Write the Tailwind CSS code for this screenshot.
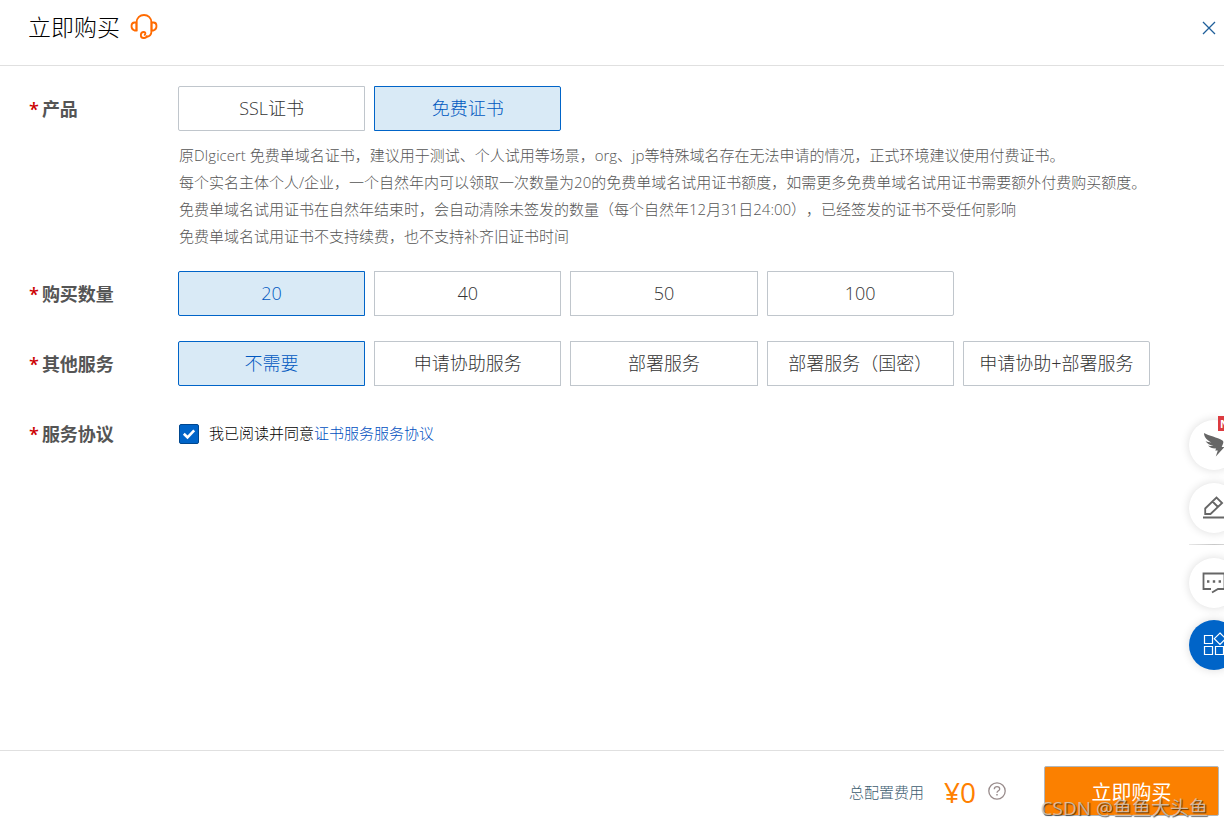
<!DOCTYPE html>
<html lang="zh-CN">
<head>
<meta charset="utf-8">
<meta name="viewport" content="width=device-width, initial-scale=1">
<title>立即购买</title>
<script src="https://cdn.jsdelivr.net/npm/@tailwindcss/browser@4"></script>
</head>
<body class="bg-white text-[#333] font-['Open_Sans','Noto_Sans_CJK_SC',sans-serif] font-light overflow-x-hidden">
<div class="relative min-h-screen flex flex-col overflow-hidden">
  <header class="h-[66px] shrink-0 border-b border-[#e0e0e0] flex items-start justify-between pl-[28px] pr-2 pt-[11px]">
    <div class="flex items-center gap-[10px]">
      <h1 class="text-[23px] leading-8 text-black">立即购买</h1>
      <svg class="w-[28px] h-[28px]" viewBox="0 0 28 28" fill="none" stroke="#ff6a00" stroke-width="1.800" aria-hidden="true">
        <path d="M6.500 18V9.500C6.800 4.800 10 2 14 2s7.200 2.800 7.500 7.500V18c0 3-1.800 5.400-5 6"/>
        <path d="M6.500 9.500H4.500Q1.500 9.500 1.500 13t3 4.500h2zM21.500 9.500h2q3 0 3 3.500t-3 4.500h-2z"/>
        <path d="M16.800 22.300a3 3 0 1 1-3-3.300c1.200 0 1.600.8 1.600 1.600s-.6 1.400-1.500 1.400"/>
      </svg>
    </div>
    <button type="button" aria-label="关闭" class="mt-[10px] w-[14px] h-[14px] text-[#1f5f9a]">
      <svg class="w-full h-full" viewBox="0 0 14 14" fill="none" stroke="currentColor" stroke-width="1.300"><path d="M1 1l12 12M13 1L1 13"/></svg>
    </button>
  </header>

  <main class="flex-1 flex flex-col gap-[25px] pt-5 pl-[29px] pr-16">
    <fieldset class="flex items-start" aria-labelledby="l1">
      <div id="l1" class="w-[149px] shrink-0 flex gap-[3px] pt-[2px] text-[18px] leading-[43px] font-bold text-[#555]"><span class="text-[#c00] font-semibold">*</span>产品</div>
      <div class="flex-1">
        <div class="grid grid-cols-5 gap-[9px] max-w-[972px]">
          <label class="relative h-[45px] flex items-center justify-center border border-[#c0c6cc] text-[18px] whitespace-nowrap cursor-pointer first:rounded-l-xs last:rounded-r-xs has-checked:border-[#0064c8] has-checked:bg-[#d9eaf6] has-checked:text-[#0058c0]"><input class="sr-only" type="radio" name="product">SSL证书</label>
          <label class="relative h-[45px] flex items-center justify-center border border-[#c0c6cc] text-[18px] whitespace-nowrap cursor-pointer first:rounded-l-xs last:rounded-r-xs has-checked:border-[#0064c8] has-checked:bg-[#d9eaf6] has-checked:text-[#0058c0]"><input class="sr-only" type="radio" name="product" checked>免费证书</label>
        </div>
        <div class="pt-[11px] -mb-1 pl-px text-[15px] leading-[27px] text-[#555] [text-spacing-trim:space-all]">
          <p>原DIgicert 免费单域名证书，建议用于测试、个人试用等场景，org、jp等特殊域名存在无法申请的情况，正式环境建议使用付费证书。</p>
          <p>每个实名主体个人/企业，一个自然年内可以领取一次数量为20的免费单域名试用证书额度，如需更多免费单域名试用证书需要额外付费购买额度。</p>
          <p>免费单域名试用证书在自然年结束时，会自动清除未签发的数量（每个自然年12月31日24:00），已经签发的证书不受任何影响</p>
          <p>免费单域名试用证书不支持续费，也不支持补齐旧证书时间</p>
        </div>
      </div>
    </fieldset>

    <fieldset class="flex items-start" aria-labelledby="l2">
      <div id="l2" class="w-[149px] shrink-0 flex gap-[3px] pt-[2px] text-[18px] leading-[43px] font-bold text-[#555]"><span class="text-[#c00] font-semibold">*</span>购买数量</div>
      <div class="flex-1 grid grid-cols-5 gap-[9px] max-w-[972px]">
        <label class="relative h-[45px] flex items-center justify-center border border-[#c0c6cc] text-[18px] whitespace-nowrap cursor-pointer first:rounded-l-xs last:rounded-r-xs has-checked:border-[#0064c8] has-checked:bg-[#d9eaf6] has-checked:text-[#0058c0]"><input class="sr-only" type="radio" name="count" checked>20</label>
        <label class="relative h-[45px] flex items-center justify-center border border-[#c0c6cc] text-[18px] whitespace-nowrap cursor-pointer first:rounded-l-xs last:rounded-r-xs has-checked:border-[#0064c8] has-checked:bg-[#d9eaf6] has-checked:text-[#0058c0]"><input class="sr-only" type="radio" name="count">40</label>
        <label class="relative h-[45px] flex items-center justify-center border border-[#c0c6cc] text-[18px] whitespace-nowrap cursor-pointer first:rounded-l-xs last:rounded-r-xs has-checked:border-[#0064c8] has-checked:bg-[#d9eaf6] has-checked:text-[#0058c0]"><input class="sr-only" type="radio" name="count">50</label>
        <label class="relative h-[45px] flex items-center justify-center border border-[#c0c6cc] text-[18px] whitespace-nowrap cursor-pointer first:rounded-l-xs last:rounded-r-xs has-checked:border-[#0064c8] has-checked:bg-[#d9eaf6] has-checked:text-[#0058c0]"><input class="sr-only" type="radio" name="count">100</label>
      </div>
    </fieldset>

    <fieldset class="flex items-start" aria-labelledby="l3">
      <div id="l3" class="w-[149px] shrink-0 flex gap-[3px] pt-[2px] text-[18px] leading-[43px] font-bold text-[#555]"><span class="text-[#c00] font-semibold">*</span>其他服务</div>
      <div class="flex-1 grid grid-cols-5 gap-[9px] max-w-[972px]">
        <label class="relative h-[45px] flex items-center justify-center border border-[#c0c6cc] text-[18px] whitespace-nowrap cursor-pointer first:rounded-l-xs last:rounded-r-xs has-checked:border-[#0064c8] has-checked:bg-[#d9eaf6] has-checked:text-[#0058c0]"><input class="sr-only" type="radio" name="service" checked>不需要</label>
        <label class="relative h-[45px] flex items-center justify-center border border-[#c0c6cc] text-[18px] whitespace-nowrap cursor-pointer first:rounded-l-xs last:rounded-r-xs has-checked:border-[#0064c8] has-checked:bg-[#d9eaf6] has-checked:text-[#0058c0]"><input class="sr-only" type="radio" name="service">申请协助服务</label>
        <label class="relative h-[45px] flex items-center justify-center border border-[#c0c6cc] text-[18px] whitespace-nowrap cursor-pointer first:rounded-l-xs last:rounded-r-xs has-checked:border-[#0064c8] has-checked:bg-[#d9eaf6] has-checked:text-[#0058c0]"><input class="sr-only" type="radio" name="service">部署服务</label>
        <label class="relative h-[45px] flex items-center justify-center border border-[#c0c6cc] text-[18px] whitespace-nowrap cursor-pointer first:rounded-l-xs last:rounded-r-xs has-checked:border-[#0064c8] has-checked:bg-[#d9eaf6] has-checked:text-[#0058c0]"><input class="sr-only" type="radio" name="service">部署服务（国密）</label>
        <label class="relative h-[45px] flex items-center justify-center border border-[#c0c6cc] text-[18px] whitespace-nowrap cursor-pointer first:rounded-l-xs last:rounded-r-xs has-checked:border-[#0064c8] has-checked:bg-[#d9eaf6] has-checked:text-[#0058c0]"><input class="sr-only" type="radio" name="service">申请协助+部署服务</label>
      </div>
    </fieldset>

    <div class="flex items-center">
      <div class="w-[150px] shrink-0 flex gap-[3px] pt-[2px] text-[18px] leading-[43px] font-bold text-[#555]"><span class="text-[#c00] font-semibold">*</span>服务协议</div>
      <div class="flex items-center text-[15px] text-black">
        <span class="grid w-5 h-5 mr-[10px]">
          <input id="agree" type="checkbox" checked class="peer col-start-1 row-start-1 appearance-none w-5 h-5 rounded-xs border border-[#00478f] checked:bg-[#0064c8]">
          <svg class="col-start-1 row-start-1 w-5 h-5 pointer-events-none" viewBox="0 0 20 20" fill="none" stroke="#fff" stroke-width="2.600" aria-hidden="true"><path d="M4.800 9.800l3.700 3.500 6.700-7"/></svg>
        </span>
        <label for="agree">我已阅读并同意</label><a href="#" class="text-[#0050c0]">证书服务服务协议</a>
      </div>
    </div>
  </main>

  <footer class="h-[78px] shrink-0 border-t border-[#e0e0e0] flex items-center justify-end pr-[5px] pt-[6px]">
    <span class="text-[15px] text-[#3c5c70] mr-5">总配置费用</span>
    <span class="text-[28px] leading-8 font-normal text-[#ff8000] mr-3 mb-[2px]">¥0</span>
    <button type="button" aria-label="费用说明" class="w-[18px] h-[18px] mr-[38px] mb-1 text-[#998c8c]">
      <svg class="w-full h-full" viewBox="0 0 18 18" fill="none" stroke="currentColor" stroke-width="1.300"><circle cx="9" cy="9" r="8.200"/><path d="M6.300 7.200C6.300 5.500 7.400 4.600 9 4.600s2.700.9 2.700 2.300c0 1.900-2.700 1.900-2.700 3.900"/><path d="M9 12v1.600" stroke-width="1.500"/></svg>
    </button>
    <button type="button" class="w-[175px] h-[50px] pt-[3px] rounded-xs border border-[#b0b8be] bg-[#fb8000] text-white text-[20px] font-normal mb-[3px]">立即购买</button>
  </footer>

  <!-- Floating toolbar, partly beyond the right edge -->
  <aside class="absolute -right-[15px] top-[420px] w-[50px] flex flex-col" aria-label="工具栏">
    <button type="button" aria-label="消息" class="relative w-[50px] h-[50px] rounded-full bg-white shadow-[0_0_10px_rgba(0,0,0,0.14)]">
      <svg class="w-full h-full" viewBox="0 0 50 50" fill="#666"><path d="M15 13c5 3 13 4 18.500 7.500 2 1.400 0 4-.8 6.500h2.800l-8.700 9.500 2-6h-2.600l1-2c-4 .2-6.200-1-8.200-3 2 .6 4 .6 5.500.4-3.500-.7-6.500-2.400-8-5 2 1 4 1.400 6 1.500-4-1.900-7.400-4.700-7.500-9.400z"/></svg>
      <span class="absolute left-[29px] -top-[4px] h-[15px] px-[2px] bg-[#dc3b40] text-white text-[11px] leading-[15px] font-bold">NEW</span>
    </button>
    <button type="button" aria-label="编辑" class="mt-[13px] w-[50px] h-[50px] rounded-full bg-white shadow-[0_0_10px_rgba(0,0,0,0.14)]">
      <svg class="w-full h-full" viewBox="0 0 50 50" fill="none" stroke="#666" stroke-width="1.800"><path d="M16.200 31v-5.500L27.500 14.600l5.600 5.400L21.500 31zM23.500 18.500l5.500 5.500M14 34.500h22"/></svg>
    </button>
    <div role="separator" class="mt-[11px] mb-[13px] h-px bg-linear-to-r from-[#e8e8e8] via-[#c8c8c8] to-[#e8e8e8]"></div>
    <button type="button" aria-label="客服" class="w-[50px] h-[50px] rounded-full bg-white shadow-[0_0_10px_rgba(0,0,0,0.14)]">
      <svg class="w-full h-full" viewBox="0 0 50 50" fill="none" stroke="#666" stroke-width="1.800"><path d="M22 31h-7.500V15.500h21V31h-6.500L23 34.500"/><path d="M18 23.500h2.400M23.800 23.500h2.400M29.600 23.500h2.400" stroke-width="2.400"/></svg>
    </button>
    <button type="button" aria-label="更多" class="mt-3 w-[50px] h-[50px] rounded-full bg-[#0064c8] shadow-[0_0_10px_rgba(0,0,0,0.14)]">
      <svg class="w-full h-full" viewBox="0 0 50 50" fill="none" stroke="#fff" stroke-width="1.200"><path d="M15.500 15.500h8v8h-8zM15.500 26.500h8v8h-8zM26.500 26.500h8v8h-8zM31 13l5.700 5.700-5.700 5.700-5.700-5.700z"/></svg>
    </button>
  </aside>

  <div class="absolute right-4 bottom-[8px] text-[19px] leading-6 font-normal text-[#d8cfc6]/80 whitespace-nowrap pointer-events-none [text-shadow:1px_1px_1px_rgba(0,0,0,0.6)]">CSDN @鱼鱼大头鱼</div>
</div>
</body>
</html>
